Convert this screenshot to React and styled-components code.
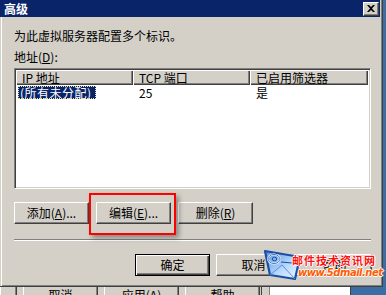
import React from "react";
import styled, { createGlobalStyle, css } from "styled-components";

const Global = createGlobalStyle`
  html, body { margin: 0; padding: 0; }
  body {
    background: #3a6ea5;
    font-family: "Noto Sans CJK SC", "Noto Sans", sans-serif;
    font-size: 12px;
    color: #000;
  }
`;

const Screen = styled.div`
  width: 386px;
  height: 295px;
  overflow: hidden;
  position: relative;
  display: flex;
  flex-direction: column;
  background: #3a6ea5;
`;

const Dialog = styled.div`
  box-sizing: border-box;
  width: 383px;
  height: 287px;
  flex: none;
  background: #d4d0c8;
  border-right: 1px solid #404040;
  border-bottom: 1px solid #404040;
  box-shadow: inset -1px -1px 0 #808080;
  padding-right: 2px;
  display: flex;
  flex-direction: column;
  position: relative;
`;

const TitleBar = styled.div`
  height: 17px;
  flex: none;
  background: #0a246a;
  display: flex;
  align-items: center;
  justify-content: space-between;
  padding: 0 1px 0 4px;
`;

const Title = styled.span`
  color: #fff;
  font-weight: bold;
  font-size: 12px;
  line-height: 14px;
`;

const CloseBtn = styled.div`
  box-sizing: border-box;
  width: 16px;
  height: 14px;
  background: #d4d0c8;
  border: 1px solid;
  border-color: #fff #404040 #404040 #fff;
  box-shadow: inset -1px -1px 0 #808080;
  display: flex;
  align-items: center;
  justify-content: center;
`;

const Body = styled.div`
  flex: 1;
  display: flex;
  flex-direction: column;
  padding: 12px 0 0 14px;
  box-shadow: inset 1px 0 0 #d4d0c8, inset 2px 0 0 #fff;
`;

const Label = styled.div`
  line-height: 14px;
  height: 14px;
  margin-top: ${(p) => p.$mt || 0}px;
  white-space: nowrap;
`;

const ListView = styled.div`
  box-sizing: border-box;
  width: 357px;
  height: 121px;
  margin-top: 4px;
  background: #fff;
  border: 1px solid;
  border-color: #808080 #fff #fff #808080;
  box-shadow: inset 1px 1px 0 #404040, inset -1px -1px 0 #d4d0c8;
  padding: 1px;
  display: flex;
  flex-direction: column;
`;

const HeaderRow = styled.div`
  display: flex;
  height: 15px;
`;

const HeaderCell = styled.div`
  box-sizing: border-box;
  width: ${(p) => p.$w}px;
  height: 15px;
  background: #d4d0c8;
  box-shadow: inset 1px 1px 0 #fff, inset -1px -1px 0 #404040, inset -2px -2px 0 #808080;
  padding-left: 6px;
  line-height: 15px;
  white-space: nowrap;
  overflow: hidden;
`;

const Row = styled.div`
  display: flex;
  height: 14px;
  margin-top: 1px;
`;

const Cell = styled.div`
  box-sizing: border-box;
  width: ${(p) => p.$w}px;
  padding-left: ${(p) => p.$pl}px;
  line-height: 14px;
  white-space: nowrap;
`;

const Selected = styled.span`
  display: inline-block;
  background: #0a246a;
  color: #fff;
  padding: 0 4px 0 2px;
  line-height: 13px;
  letter-spacing: 0.5px;
  outline: 1px dotted #e8e4a0;
  outline-offset: -1px;
`;

const ButtonRow = styled.div`
  display: flex;
  gap: 7px;
  margin-top: 13px;
  position: relative;
`;

const Btn = styled.div`
  box-sizing: border-box;
  width: 75px;
  height: 22px;
  background: #d4d0c8;
  border: 1px solid;
  border-color: #fff #404040 #404040 #fff;
  box-shadow: inset -1px -1px 0 #808080;
  display: flex;
  align-items: center;
  justify-content: center;
  line-height: 14px;
  white-space: nowrap;
  ${(p) =>
    p.$default &&
    css`
      border-color: #000;
      box-shadow: inset 1px 1px 0 #fff, inset -1px -1px 0 #404040, inset -2px -2px 0 #808080;
    `}
`;

const Highlight = styled.div`
  position: absolute;
  left: 75px;
  top: -9px;
  width: 87px;
  height: 42px;
  box-sizing: border-box;
  border: 2px solid #ff0000;
  box-shadow: 3px 3px 5px rgba(0, 0, 0, 0.35);
  pointer-events: none;
`;

const Separator = styled.div`
  width: 357px;
  height: 1px;
  background: #808080;
  border-bottom: 1px solid #fff;
  margin-top: 15px;
`;

const FooterRow = styled.div`
  display: flex;
  justify-content: flex-end;
  gap: 6px;
  width: 358px;
  margin-top: 13px;
`;

const Watermark = styled.div`
  position: absolute;
  left: 262px;
  top: 249px;
  width: 118px;
  height: 36px;
  pointer-events: none;
`;

const WmIcon = styled.svg`
  position: absolute;
  left: 0;
  top: 0;
`;

const WmTitle = styled.div`
  position: absolute;
  left: 30px;
  top: 5px;
  font-size: 11px;
  line-height: 13px;
  font-weight: bold;
  letter-spacing: 1px;
  color: #ff1010;
  white-space: nowrap;
  text-shadow: 1px 0 0 #fff, -1px 0 0 #fff, 0 1px 0 #fff, 0 -1px 0 #fff;
`;

const WmUrl = styled.div`
  position: absolute;
  left: 36px;
  top: 18px;
  font-family: "DejaVu Sans", sans-serif;
  font-size: 10px;
  line-height: 12px;
  font-weight: bold;
  font-style: italic;
  color: #ff5a00;
  white-space: nowrap;
  letter-spacing: -0.5px;
  text-shadow: 1px 0 0 #fff, -1px 0 0 #fff, 0 1px 0 #fff, 0 -1px 0 #fff;
`;

const BehindStrip = styled.div`
  flex: 1;
  display: flex;
  background: #3a6ea5;
  overflow: hidden;
`;

const BehindGray = styled.div`
  width: 270px;
  background: #d4d0c8;
  display: flex;
  gap: 6px;
  box-shadow: inset -1px 0 0 #808080, inset -8px 0 0 #d4d0c8, inset -9px 0 0 #404040;
`;

const StubBtn = styled.div`
  box-sizing: border-box;
  width: ${(p) => p.$w || 75}px;
  height: 22px;
  margin-top: -4px;
  background: #d4d0c8;
  border: 1px solid;
  border-color: #fff #404040 #404040 #fff;
  box-shadow: inset -1px -1px 0 #808080;
  display: flex;
  justify-content: center;
  padding-top: 4px;
  line-height: 14px;
  white-space: nowrap;
`;

const BehindWhite = styled.div`
  width: 80px;
  background: #fff;
  border-right: 1px solid #404040;
`;

function CloseIcon() {
  return (
    <svg width="8" height="7" viewBox="0 0 8 7">
      <path d="M0 0 L2 0 L4 2 L6 0 L8 0 L5 3.5 L8 7 L6 7 L4 5 L2 7 L0 7 L3 3.5 Z" fill="#000" />
    </svg>
  );
}

export default function App() {
  return (
    <>
      <Global />
      <Screen>
        <Dialog>
          <TitleBar>
            <Title>高级</Title>
            <CloseBtn>
              <CloseIcon />
            </CloseBtn>
          </TitleBar>
          <Body>
            <Label>为此虚拟服务器配置多个标识。</Label>
            <Label $mt={7}>
              地址(<u>D</u>):
            </Label>
            <ListView>
              <HeaderRow>
                <HeaderCell $w={117}>IP 地址</HeaderCell>
                <HeaderCell $w={117}>TCP 端口</HeaderCell>
                <HeaderCell $w={118}>已启用筛选器</HeaderCell>
              </HeaderRow>
              <Row>
                <Cell $w={117} $pl={2}>
                  <Selected>(所有未分配)</Selected>
                </Cell>
                <Cell $w={117} $pl={6}>25</Cell>
                <Cell $w={118} $pl={6}>是</Cell>
              </Row>
            </ListView>
            <ButtonRow>
              <Btn>
                添加(<u>A</u>)...
              </Btn>
              <Btn>
                编辑(<u>E</u>)...
              </Btn>
              <Btn>
                删除(<u>R</u>)
              </Btn>
              <Highlight />
            </ButtonRow>
            <Separator />
            <FooterRow>
              <Btn $default>确定</Btn>
              <Btn>取消</Btn>
              <Btn>帮助</Btn>
            </FooterRow>
          </Body>
          <Watermark>
            <WmIcon width="40" height="34" viewBox="0 0 40 34">
              <defs>
                <linearGradient id="env" x1="0" y1="0" x2="1" y2="1">
                  <stop offset="0" stopColor="#4f8fe0" />
                  <stop offset="0.6" stopColor="#bcdcff" />
                  <stop offset="1" stopColor="#eef6ff" />
                </linearGradient>
              </defs>
              <path d="M3 2 L38 8 L33 30 L8 26 Z" fill="url(#env)" stroke="#1c4ea6" strokeWidth="2.2" strokeLinejoin="round" />
              <path d="M8 26 L20 16 L33 30" fill="none" stroke="#5a8ed8" strokeWidth="1" />
              <ellipse cx="12" cy="10" rx="6" ry="4.5" fill="none" stroke="#ffffff" strokeWidth="2" />
              <ellipse cx="12" cy="10" rx="6" ry="4.5" fill="none" stroke="#1c4ea6" strokeWidth="0.8" />
              <ellipse cx="12.5" cy="10" rx="2.2" ry="1.8" fill="none" stroke="#1c4ea6" strokeWidth="1" />
              <path d="M19 13 L30 14" stroke="#1c4ea6" strokeWidth="1.2" />
            </WmIcon>
            <WmTitle>邮件技术资讯网</WmTitle>
            <WmUrl>www.5dmail.net</WmUrl>
          </Watermark>
        </Dialog>
        <BehindStrip>
          <BehindGray>
            <StubBtn $w={17} />
            <StubBtn>取消</StubBtn>
            <StubBtn>应用(A)</StubBtn>
            <StubBtn>帮助</StubBtn>
          </BehindGray>
          <BehindWhite />
        </BehindStrip>
      </Screen>
    </>
  );
}
